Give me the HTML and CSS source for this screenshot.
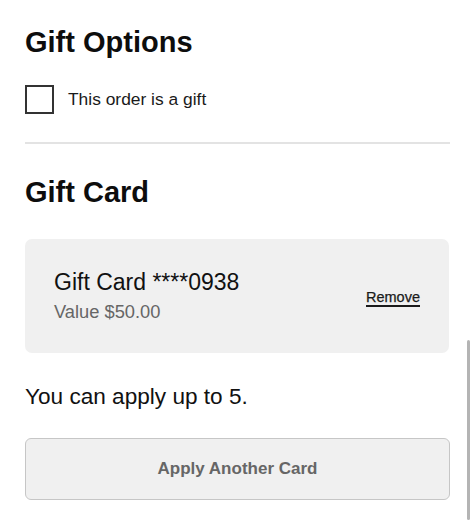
FILE: index.html
```html
<!DOCTYPE html>
<html>
<head>
<meta charset="utf-8">
<link rel="stylesheet" href="styles.css">
</head>
<body>
<main class="page">
  <h2 class="heading heading-first">Gift Options</h2>
  <label class="gift-row">
    <span class="checkbox"></span>
    <span class="gift-label">This order is a gift</span>
  </label>
  <hr class="divider">
  <h2 class="heading heading-card">Gift Card</h2>
  <div class="card">
    <div class="card-info">
      <div class="card-title">Gift Card ****0938</div>
      <div class="card-value">Value $50.00</div>
    </div>
    <a class="remove">Remove</a>
  </div>
  <p class="limit">You can apply up to 5.</p>
  <button class="apply">Apply Another Card</button>
</main>
<div class="scrollbar"></div>
</body>
</html>
```
FILE: styles.css
```css
* { box-sizing: border-box; }
html, body {
  margin: 0;
  padding: 0;
  background: #ffffff;
  font-family: "Liberation Sans", Arial, sans-serif;
  color: #111;
}
.page {
  width: 474px;
  padding: 0 25px;
  display: flex;
  flex-direction: column;
}
.heading {
  margin: 0;
  font-size: 29px;
  line-height: 34px;
  font-weight: bold;
  color: #0d0d0d;
}
.heading-first { margin-top: 25px; }
.heading-card { margin-top: 31px; }
.gift-row {
  display: flex;
  align-items: center;
  margin-top: 26px;
  height: 29px;
}
.checkbox {
  width: 29px;
  height: 29px;
  border: 2px solid #333;
  background: #fff;
  flex: none;
}
.gift-label {
  margin-left: 14px;
  font-size: 17.4px;
  color: #1a1a1a;
}
.divider {
  margin: 28px 0 0 0;
  border: none;
  border-top: 2px solid #e3e3e3;
  width: 425px;
  height: 0;
}
.card {
  margin-top: 30px;
  background: #f0f0f0;
  border-radius: 7px;
  height: 114px;
  padding: 0 29px;
  display: flex;
  align-items: center;
  justify-content: space-between;
}
.card-title {
  font-size: 23px;
  line-height: 26px;
  color: #111;
}
.card-value {
  margin-top: 6px;
  font-size: 18.3px;
  line-height: 22px;
  color: #666;
}
.remove {
  font-size: 14.5px;
  color: #1a1a1a;
  text-decoration: underline;
  text-decoration-thickness: 1.5px;
  text-underline-offset: 3px;
  margin-top: 2px;
  -webkit-text-stroke: 0.25px #1a1a1a;
}
.limit {
  margin: 31px 0 0 0;
  font-size: 22.6px;
  line-height: 26px;
  color: #111;
}
.apply {
  margin-top: 28px;
  width: 425px;
  height: 62px;
  background: #f0f0f0;
  border: 1px solid #c6c6c6;
  border-radius: 6px;
  font-family: "Liberation Sans", Arial, sans-serif;
  font-size: 17px;
  font-weight: bold;
  color: #666;
  padding: 0;
}
.scrollbar {
  position: absolute;
  left: 467px;
  top: 340px;
  width: 3px;
  height: 180px;
  border-radius: 2px;
  background: #b4b4b4;
}
```
